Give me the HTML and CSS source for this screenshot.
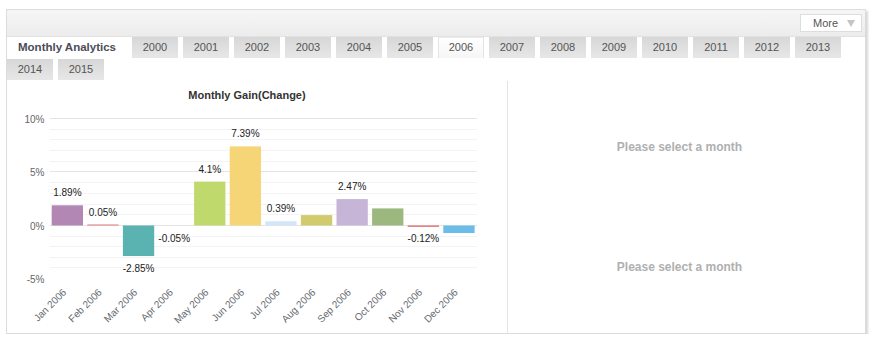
FILE: index.html
```html
<!DOCTYPE html>
<html lang="en">
<head>
    <meta charset="UTF-8">
    <title>Monthly Analytics</title>
    <link rel="stylesheet" href="styles.css">
</head>
<body>
    <div class="widget">
        <div class="widget-head">
            <button class="more-btn">More <span class="caret"></span></button>
        </div>
        <div class="tabs">
            <span class="tabs-title">Monthly Analytics</span>
            <a class="tab">2000</a>
            <a class="tab">2001</a>
            <a class="tab">2002</a>
            <a class="tab">2003</a>
            <a class="tab">2004</a>
            <a class="tab">2005</a>
            <a class="tab active">2006</a>
            <a class="tab">2007</a>
            <a class="tab">2008</a>
            <a class="tab">2009</a>
            <a class="tab">2010</a>
            <a class="tab">2011</a>
            <a class="tab">2012</a>
            <a class="tab">2013</a>
            <a class="tab">2014</a>
            <a class="tab">2015</a>
        </div>
        <div class="widget-body">
            <div class="chart-pane">
                <svg class="chart" width="500" height="252" viewBox="0 0 500 252">
                    <text class="chart-title" x="240" y="18" text-anchor="middle">Monthly Gain(Change)</text>

                    <!-- grid, 1% = 10.7px, zero at 144.5 -->
                    <g class="grid-minor">
                        <line x1="43" x2="470" y1="48.5" y2="48.5"/>
                        <line x1="43" x2="470" y1="58.5" y2="58.5"/>
                        <line x1="43" x2="470" y1="69.5" y2="69.5"/>
                        <line x1="43" x2="470" y1="80.5" y2="80.5"/>
                        <line x1="43" x2="470" y1="101.5" y2="101.5"/>
                        <line x1="43" x2="470" y1="112.5" y2="112.5"/>
                        <line x1="43" x2="470" y1="123.5" y2="123.5"/>
                        <line x1="43" x2="470" y1="133.5" y2="133.5"/>
                        <line x1="43" x2="470" y1="155.5" y2="155.5"/>
                        <line x1="43" x2="470" y1="165.5" y2="165.5"/>
                        <line x1="43" x2="470" y1="176.5" y2="176.5"/>
                        <line x1="43" x2="470" y1="186.5" y2="186.5"/>
                    </g>
                    <g class="grid-major">
                        <line x1="43" x2="470" y1="37.5" y2="37.5"/>
                        <line x1="43" x2="470" y1="90.5" y2="90.5"/>
                        <line x1="43" x2="470" y1="144.5" y2="144.5"/>
                    </g>

                    <g class="y-labels" text-anchor="end">
                        <text x="37.5" y="41.5">10%</text>
                        <text x="37.5" y="94.5">5%</text>
                        <text x="37.5" y="148.5">0%</text>
                        <text x="37.5" y="202">-5%</text>
                    </g>

                    <g class="bars">
                        <rect x="44.7" y="124.3" width="31.3" height="20.2" fill="#b387b4"/>
                        <rect x="80.3" y="143.5" width="31.3" height="1" fill="#e07b7b"/>
                        <rect x="115.9" y="144.5" width="31.3" height="30.5" fill="#5ab3b1"/>
                        <rect x="187.1" y="100.6" width="31.3" height="43.9" fill="#c0d96c"/>
                        <rect x="222.7" y="65.4" width="31.3" height="79.1" fill="#f5d576"/>
                        <rect x="258.3" y="140.3" width="31.3" height="4.2" fill="#d3e6f7"/>
                        <rect x="293.9" y="134.1" width="31.3" height="10.4" fill="#d1cb6e"/>
                        <rect x="329.5" y="118.1" width="31.3" height="26.4" fill="#c6b5d7"/>
                        <rect x="365.1" y="127.4" width="31.3" height="17.1" fill="#9cb87e"/>
                        <rect x="400.7" y="144.5" width="31.3" height="1.3" fill="#e06565"/>
                        <rect x="436.3" y="144.5" width="31.3" height="7.5" fill="#6bbde8"/>
                    </g>

                    <g class="values" text-anchor="middle">
                        <text x="60.4" y="115.3">1.89%</text>
                        <text x="96" y="134.5">0.05%</text>
                        <text x="131.6" y="191">-2.85%</text>
                        <text x="167.2" y="160.5">-0.05%</text>
                        <text x="202.8" y="91.6">4.1%</text>
                        <text x="238.4" y="56.4">7.39%</text>
                        <text x="274" y="131.3">0.39%</text>
                        <text x="345.2" y="109.1">2.47%</text>
                        <text x="416.4" y="161">-0.12%</text>
                    </g>

                    <g class="x-labels" text-anchor="end">
                        <text transform="translate(60,212) rotate(-45)">Jan 2006</text>
                        <text transform="translate(95.5,212) rotate(-45)">Feb 2006</text>
                        <text transform="translate(131,212) rotate(-45)">Mar 2006</text>
                        <text transform="translate(166.7,212) rotate(-45)">Apr 2006</text>
                        <text transform="translate(202.3,212) rotate(-45)">May 2006</text>
                        <text transform="translate(237.9,212) rotate(-45)">Jun 2006</text>
                        <text transform="translate(273.5,212) rotate(-45)">Jul 2006</text>
                        <text transform="translate(309.1,212) rotate(-45)">Aug 2006</text>
                        <text transform="translate(344.7,212) rotate(-45)">Sep 2006</text>
                        <text transform="translate(380.3,212) rotate(-45)">Oct 2006</text>
                        <text transform="translate(415.9,212) rotate(-45)">Nov 2006</text>
                        <text transform="translate(451.5,212) rotate(-45)">Dec 2006</text>
                    </g>
                </svg>
            </div>
            <div class="detail-pane">
                <div class="detail-box">Please select a month</div>
                <div class="detail-box">Please select a month</div>
            </div>
        </div>
    </div>
</body>
</html>
```

FILE: styles.css
```css
body {
    margin: 0;
    background: #ffffff;
    font-family: 'Liberation Sans', Arial, sans-serif;
}
.widget {
    margin: 9px 0 0 6px;
    width: 858px;
    border: 1px solid #dcdcdc;
    box-shadow: 2px 2px 2px #d8d8d8;
    background: #ffffff;
}
.widget-head {
    height: 27px;
    box-sizing: border-box;
    padding: 4px 3px 0 0;
    display: flex;
    justify-content: flex-end;
    align-items: flex-start;
    background: linear-gradient(#f6f6f6, #ececec);
    border-bottom: 1px solid #e2e2e2;
}
.more-btn {
    width: 62px;
    height: 18px;
    padding: 0 6px 0 12px;
    display: flex;
    align-items: center;
    justify-content: space-between;
    background: #ffffff;
    border: 1px solid #dddddd;
    font-family: inherit;
    font-size: 11px;
    color: #555555;
}
.caret {
    width: 0;
    height: 0;
    border-left: 4px solid transparent;
    border-right: 4px solid transparent;
    border-top: 7px solid #c4c4c4;
}
.tabs {
    display: flex;
    flex-wrap: wrap;
}
.tabs-title {
    width: 120px;
    height: 21px;
    margin: 0 5px 1px 0;
    padding-left: 11px;
    box-sizing: border-box;
    line-height: 21px;
    font-size: 11.5px;
    font-weight: bold;
    color: #4c4c56;
}
.tab {
    width: 46px;
    height: 21px;
    margin: 0 5px 1px 0;
    line-height: 21px;
    text-align: center;
    font-size: 11px;
    color: #555555;
    background: linear-gradient(#d7d7d7, #e7e7e7);
    cursor: pointer;
}
.tab.active {
    background: linear-gradient(#ffffff, #f6f6f6);
    box-shadow: inset 1px 0 0 #e4e4e4, inset -1px 0 0 #e4e4e4, inset 0 1px 0 #ececec;
}
.widget-body {
    display: flex;
    height: 252px;
}
.chart-pane {
    width: 500px;
    border-right: 1px solid #e4e4e4;
}
.chart {
    display: block;
}
.chart-title {
    font-size: 11px;
    font-weight: bold;
    fill: #333333;
}
.grid-minor line {
    stroke: #f3f3f3;
    stroke-width: 1;
}
.grid-major line {
    stroke: #e4e4e4;
    stroke-width: 1;
}
.y-labels text {
    font-size: 10px;
    fill: #666666;
}
.values text {
    font-size: 10px;
    fill: #222222;
}
.x-labels text {
    font-size: 10px;
    fill: #666a70;
}
.detail-pane {
    flex: 1;
    padding: 6px 14px 0 0;
}
.detail-box {
    height: 120px;
    display: flex;
    align-items: center;
    justify-content: center;
    font-size: 12px;
    font-weight: bold;
    color: #b0b0b0;
}
```
